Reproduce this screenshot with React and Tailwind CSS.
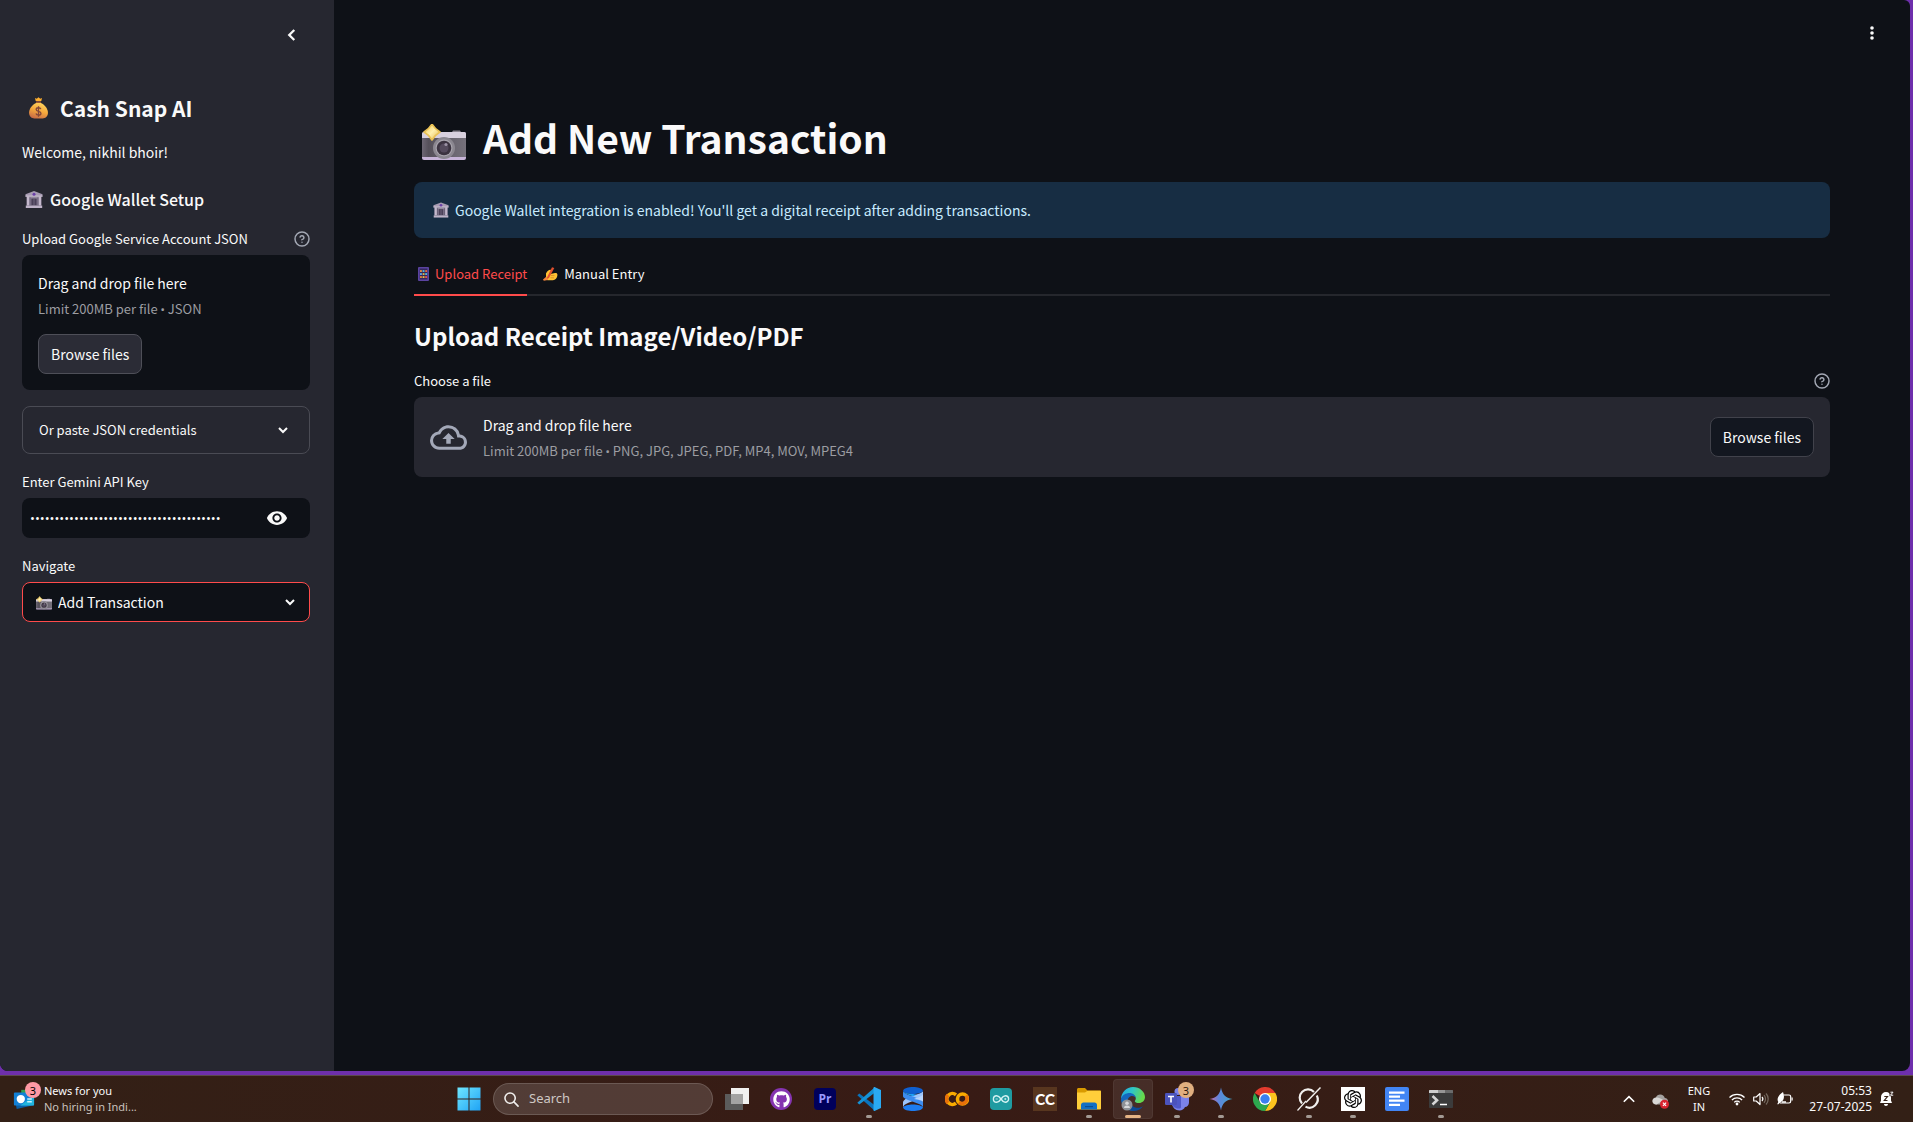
import React from "react";
import { SiOpenai } from "react-icons/si";
import { FaGithub } from "react-icons/fa";

/* ---------- Emoji-style pictograms ---------- */

function MoneyBag({ className }) {
  return (
    <svg viewBox="0 0 24 26" className={className} aria-hidden="true">
      <defs>
        <linearGradient id="bag" x1="0.7" y1="0" x2="0.3" y2="1">
          <stop offset="0" stopColor="#ffd35c" />
          <stop offset="0.5" stopColor="#f5a83c" />
          <stop offset="1" stopColor="#c86a45" />
        </linearGradient>
      </defs>
      <path d="M8 1.6 10 2.4 12 .8l2 1.6 2-.8-.8 3.4H8.8z" fill="#ffb02e" />
      <rect x="9" y="5.2" width="6" height="2.3" rx="1" fill="#9a5a3a" />
      <path d="M9.2 7.3h5.6C19.5 9.5 22.8 14 22.8 18.5c0 4.5-3.3 6.5-6 6.5H7.2c-2.7 0-6-2-6-6.5 0-4.5 3.3-9 8-11.2z" fill="url(#bag)" />
      <path d="M14.7 14.3c-.4-1.1-1.5-1.6-2.7-1.6-1.5 0-2.700.8-2.700 2.100 0 3 5.500 1.300 5.500 4.200 0 1.400-1.300 2.200-2.800 2.200-1.400 0-2.600-.7-2.900-1.900M12 11v12" fill="none" stroke="#84473a" strokeWidth="1.5" />
    </svg>
  );
}

function Bank({ className }) {
  return (
    <svg viewBox="0 0 18 17" className={className} aria-hidden="true">
      <path d="M9 0 17.5 3.2V5.5H.5V3.2z" fill="#a79bb2" />
      <path d="M1.5 5.5h15v9h-15z" fill="#94899f" />
      <path d="M2 5.5h2.2v9H2zM13.8 5.5H16v9h-2.200z" fill="#c4b8cc" />
      <path d="M4.7 6.5h.8v8h-.8zM12.5 6.5h.8v8h-.8z" fill="#5a5068" />
      <path d="M6.3 7.5h5.4v7H6.3z" fill="#4a4058" />
      <path d="M8.500 8v6.500h1V8z" fill="#6e647c" />
      <path d="M.8 14.5h16.4V17H.8z" fill="#bfb3c8" />
      <path d="M.5 4.6h17v1.1H.5z" fill="#cfc5d6" />
      <circle cx="9" cy="3.2" r="1.5" fill="#6a3fa8" />
    </svg>
  );
}

function Camera({ className }) {
  return (
    <svg viewBox="0 0 44 36" className={className} aria-hidden="true">
      <defs>
        <linearGradient id="camBody" x1="0" y1="0" x2="1" y2="0">
          <stop offset="0" stopColor="#6d6774" />
          <stop offset="0.15" stopColor="#55505a" />
          <stop offset="1" stopColor="#76727c" />
        </linearGradient>
        <linearGradient id="camSpark" x1="0" y1="0" x2="1" y2="1">
          <stop offset="0" stopColor="#f2c64a" />
          <stop offset="0.5" stopColor="#fff0ae" />
          <stop offset="1" stopColor="#e3b84d" />
        </linearGradient>
      </defs>
      <path d="M30 8l1-1.5h7l1 1.5z" fill="#8a848f" />
      <rect x="0" y="8" width="44" height="28" rx="2" fill="#c7b4d8" />
      <rect x="0" y="8" width="44" height="7" rx="2" fill="#d8d0de" />
      <rect x="0" y="14" width="44" height="19" fill="url(#camBody)" />
      <circle cx="22" cy="24" r="11" fill="#8b8790" />
      <circle cx="22" cy="24" r="8.5" fill="#a8a4ad" />
      <circle cx="22" cy="24" r="7.3" fill="#3b3340" />
      <circle cx="22" cy="24" r="4.5" fill="#544a5c" />
      <circle cx="24" cy="20.5" r="1.6" fill="#9c92a5" />
      <path d="M10 0C12 3.500 14.500 6 18 8 14.500 10 12 12.500 10 16 8 12.500 5.500 10 2 8 5.500 6 8 3.500 10 0z" fill="url(#camSpark)" stroke="#eac255" strokeWidth="1.6" strokeLinejoin="round" />
    </svg>
  );
}

function Abacus({ className }) {
  const rows = [3.2, 6.2, 9.2];
  const cols = [
    ["#f59a3c", "#58c7e8", "#f2703c"],
    ["#5fb4f5", "#f5c542", "#58c7e8"],
    ["#f5873c", "#f2d04a", "#f25c4a"],
  ];
  return (
    <svg viewBox="0 0 11 14" className={className} aria-hidden="true">
      <rect x="0" y="0" width="11" height="14" rx="1" fill="#5a43a0" />
      <rect x="1.6" y="1.5" width="7.8" height="11" fill="#33275e" />
      {rows.map((y, r) =>
        cols[r].map((c, i) => <rect key={r + "-" + i} x={2 + i * 2.6} y={y} width="1.9" height="1.7" fill={c} />)
      )}
    </svg>
  );
}

function WritingHand({ className }) {
  return (
    <svg viewBox="0 0 15 14" className={className} aria-hidden="true">
      <path d="M3 6.5C4.5 3.5 6 2.500 7.500 2.700c1 .4.8 1.500.2 2.500L7.500 7 12 6c1.500-.3 2.300.3 2.400 1.500.2 2-1 4.300-2.400 5-1.500.8-4.500 1-7 .8-2-.2-2.500-1.500-2-3z" fill="#ffc233" />
      <path d="M9 .2 11.300 1 6 11 3 12.500z" fill="#e2502f" />
      <path d="M8 8.500l3.500.2M7.500 10.700l3.500.2" stroke="#d98a1f" strokeWidth=".8" fill="none" />
      <path d="M3.500 9.500 0 12.500l.8 1.200 4.200-.7z" fill="#f2843c" />
    </svg>
  );
}

/* ---------- Interface glyphs ---------- */

function Chevron({ className, path = "M6 9l6 6 6-6", width = 3 }) {
  return (
    <svg viewBox="0 0 24 24" className={className} fill="none" stroke="currentColor" strokeWidth={width} aria-hidden="true">
      <path d={path} />
    </svg>
  );
}

function HelpIcon() {
  return (
    <svg viewBox="0 0 24 24" className="size-4 text-[#a3a8b4]" fill="none" stroke="currentColor" strokeWidth="2.2" strokeLinecap="round" strokeLinejoin="round" aria-hidden="true">
      <circle cx="12" cy="12" r="10.5" />
      <path d="M9.09 9a3 3 0 0 1 5.83 1c0 2-3 3-3 3M12 17h.01" />
    </svg>
  );
}

function EyeIcon() {
  return (
    <svg viewBox="0 0 24 24" className="size-[22px]" fill="currentColor" aria-hidden="true">
      <path d="M12 4.5C7 4.5 2.73 7.61 1 12c1.73 4.39 6 7.5 11 7.5s9.27-3.11 11-7.5c-1.73-4.39-6-7.5-11-7.5zM12 17c-2.76 0-5-2.24-5-5s2.24-5 5-5 5 2.24 5 5-2.24 5-5 5zm0-8c-1.66 0-3 1.34-3 3s1.34 3 3 3 3-1.34 3-3-1.34-3-3-3z" />
    </svg>
  );
}

function CloudUpload() {
  return (
    <svg viewBox="0 0 24 24" className="size-[37px] text-[#a3a8b8]" fill="currentColor" aria-hidden="true">
      <path d="M19.35 10.04A7.49 7.49 0 0 0 12 4C9.11 4 6.6 5.64 5.35 8.04A5.994 5.994 0 0 0 0 14c0 3.31 2.69 6 6 6h13c2.76 0 5-2.24 5-5 0-2.64-2.05-4.78-4.65-4.96zM19 18H6c-2.21 0-4-1.79-4-4 0-2.05 1.53-3.76 3.56-3.97l1.07-.11.5-.95A5.469 5.469 0 0 1 12 6c2.62 0 4.88 1.86 5.39 4.43l.3 1.5 1.53.11A2.98 2.98 0 0 1 22 15c0 1.65-1.35 3-3 3zM8 13h2.55v3h2.9v-3H16l-4-4z" />
    </svg>
  );
}

/* ---------- Sidebar ---------- */

function Label({ htmlFor, children, help }) {
  return (
    <div className="mb-1.5 flex h-5 items-center justify-between">
      <label htmlFor={htmlFor} className="text-[13px]/5">{children}</label>
      {help && (
        <button type="button" aria-label="Help">
          <HelpIcon />
        </button>
      )}
    </div>
  );
}

function FileLimit({ types }) {
  return (
    <p className="mt-1 text-[13px]/5 text-[#9c9da2]">
      Limit 200MB per file <span className="font-['Roboto'] leading-none">•</span> {types}
    </p>
  );
}

function Sidebar() {
  return (
    <aside className="w-[334px] shrink-0 bg-[#262730] pr-6 pl-[22px]">
      <div className="flex h-[70px] items-center justify-end pr-[7px]">
        <button type="button" aria-label="Collapse sidebar">
          <Chevron className="size-[22px]" path="M14.500 6.500 9 12l5.500 5.500" width={2.5} />
        </button>
      </div>
      <h1 className="mt-6 flex h-7 items-center gap-[11px] pl-1.5 text-[21px]/7 font-bold">
        <MoneyBag className="h-6 w-[21px]" />
        Cash Snap AI
      </h1>
      <p className="mt-[18px] text-sm/6">Welcome, nikhil bhoir!</p>
      <h3 className="mt-[23px] mb-[18px] flex items-center gap-[7px] pl-[3px] text-base/6 font-medium">
        <Bank className="h-[17px] w-[18px]" />
        Google Wallet Setup
      </h3>
      <Label htmlFor="service-json" help>Upload Google Service Account JSON</Label>
      <div className="rounded-lg bg-[#0e1117] p-4">
        <p className="text-sm/6">Drag and drop file here</p>
        <FileLimit types="JSON" />
        <button id="service-json" type="button" className="mt-[15px] h-10 rounded-lg border border-[#4e4f58] bg-[#2b2c36] px-3 text-sm/6">
          Browse files
        </button>
      </div>
      <button type="button" className="mt-4 flex h-12 w-full items-center justify-between rounded-lg border border-[#4a4b54] px-4 text-[13px]/5">
        Or paste JSON credentials
        <Chevron className="mr-0.5 size-4" />
      </button>
      <div className="mt-[18px]">
        <Label htmlFor="api-key">Enter Gemini API Key</Label>
        <div className="flex h-10 items-center rounded-lg bg-[#0e1117] pr-[22px] pl-2">
          <input id="api-key" type="password" defaultValue="abcdefghijklmnopqrstuvwxyz0123456789abc" className="min-w-0 flex-1 bg-transparent font-['Open_Sans'] text-[13px]/6 outline-none" />
          <button type="button" aria-label="Show password">
            <EyeIcon />
          </button>
        </div>
      </div>
      <div className="mt-[18px]">
        <Label htmlFor="navigate">Navigate</Label>
        <div className="relative">
          <select id="navigate" className="h-10 w-full appearance-none rounded-lg border border-[#ff4b4b] bg-[#0e1117] pl-[35px] text-sm/6 outline-none">
            <option>Add Transaction</option>
          </select>
          <Camera className="pointer-events-none absolute top-3.5 left-3.5 h-3.5 w-4" />
          <Chevron className="pointer-events-none absolute top-3 right-3 size-4" />
        </div>
      </div>
    </aside>
  );
}

/* ---------- Main panel ---------- */

function MainPanel() {
  return (
    <main className="flex min-w-0 flex-1 flex-col">
      <header className="flex h-[66px] items-center justify-end pr-[30px]">
        <button type="button" aria-label="Menu" className="w-4">
          <svg viewBox="0 0 16 16" className="size-4" fill="currentColor" aria-hidden="true">
            <circle cx="8" cy="3" r="1.8" />
            <circle cx="8" cy="8" r="1.8" />
            <circle cx="8" cy="13" r="1.8" />
          </svg>
        </button>
      </header>
      <div className="px-20 pt-[47px]">
        <h1 className="flex h-12 items-center gap-[17px] pl-2 text-[39px]/12 font-bold">
          <Camera className="mt-2.5 h-9 w-11" />
          Add New Transaction
        </h1>
        <div className="mt-[21px] flex h-14 items-center gap-1.5 rounded-lg bg-[#172d43] pl-[19px] text-sm/6 text-[#c7ebff]">
          <Bank className="h-4 w-4" />
          Google Wallet integration is enabled! You'll get a digital receipt after adding transactions.
        </div>
        <div role="tablist" className="mt-4 flex h-[42px] gap-4 border-b-2 border-[#25272d] text-[13px]">
          <button type="button" role="tab" aria-selected="true" className="-mb-0.5 flex items-center gap-1.5 border-b-2 border-[#ff4b4b] pl-1 text-[#ff4b4b]">
            <Abacus className="h-3.5 w-[11px]" />
            Upload Receipt
          </button>
          <button type="button" role="tab" aria-selected="false" className="flex items-center gap-1.5">
            <WritingHand className="h-3.5 w-[15px]" />
            Manual Entry
          </button>
        </div>
        <h2 className="mt-[22px] mb-[17px] text-2xl/9 font-bold">Upload Receipt Image/Video/PDF</h2>
        <Label htmlFor="receipt-file" help>Choose a file</Label>
        <div className="flex items-center rounded-lg bg-[#262730] p-4">
          <CloudUpload />
          <div className="mr-auto ml-4">
            <p className="text-sm/6">Drag and drop file here</p>
            <FileLimit types="PNG, JPG, JPEG, PDF, MP4, MOV, MPEG4" />
          </div>
          <button id="receipt-file" type="button" className="h-10 rounded-lg border border-[#41424b] bg-[#131720] px-3 text-sm/6">
            Browse files
          </button>
        </div>
      </div>
    </main>
  );
}

/* ---------- Taskbar ---------- */

const icon = "size-6";

function StartIcon() {
  return (
    <svg viewBox="0 0 24 24" className={icon}>
      <defs>
        <linearGradient id="win" x1="0" y1="0" x2="1" y2="1">
          <stop offset="0" stopColor="#6fe6ff" />
          <stop offset="1" stopColor="#1fa3f5" />
        </linearGradient>
      </defs>
      <path d="M.5.5h11v11H.5zM12.5.5h11v11h-11zM.5 12.5h11v11H.5zM12.5 12.5h11v11h-11z" fill="url(#win)" />
    </svg>
  );
}

function TaskViewIcon() {
  return (
    <svg viewBox="0 0 24 24" className={icon}>
      <path d="M6 1h18v16H6z" fill="#f0f0f0" />
      <path d="M0 7h18v16H0z" fill="#5b5b5b" />
      <path d="M6 7h12v10H6z" fill="#a3a3a3" />
    </svg>
  );
}

function GithubIcon() {
  return (
    <span className="flex size-[22px] items-center justify-center rounded-full bg-[#8534b0] text-white">
      <FaGithub className="size-[17px]" />
    </span>
  );
}

function PremiereIcon() {
  return (
    <span className="flex size-[22px] items-center justify-center rounded bg-[#00005b] font-['Open_Sans'] text-xs font-bold text-[#9999ff]">Pr</span>
  );
}

function VsCodeIcon() {
  return (
    <svg viewBox="0 0 24 24" className={icon}>
      <path d="M.3 8.3 2.3 6.5 18 18.5V24z" fill="#0a74bd" />
      <path d="M.3 15.7 2.3 17.5 18 5.5V0z" fill="#1592d6" />
      <path d="M17.5 0 24 3v18l-6.5 3c-.8 0-1-.5-1-1V1c0-.5.2-1 1-1z" fill="#2aaaf2" />
    </svg>
  );
}

function RibbonIcon() {
  return (
    <svg viewBox="0 0 24 24" className={icon}>
      <path d="M22 4v5C20 12 13 13.500 8 15.500 4 17 2.500 18.500 2 20.500V15C3 12 8 10 12 8.500 17 7 21 6 22 4z" fill="#9cc4fb" />
      <path d="M2 4v5.500C3 12 9 13.500 14 15.500 19 17 21.500 18.500 22 20.500V15C21 12.500 16 11 12 9.500 7 7.800 3 6.500 2 4z" fill="#3c8cf0" />
      <path d="M13 12C16 10.800 20.500 9.800 22 7.500V15c-.5-1.500-5-2.500-9-3z" fill="#b9d5fc" />
      <path d="M2 4C2.500 1 7.500 0 12 0s9.500 1 10 4C21 6 16.500 7 12 7S3 6 2 4z" fill="#0f5fd0" />
      <path d="M2 20.500C2.500 23 7.500 24 12 24s9.500-1 10-3.500C21 18.500 16.500 17.500 12 17.500S3 18.500 2 20.500z" fill="#1d7cf0" />
      <path d="M2 4c1 2 5.500 3 10 3l3.500.800-3.500 1.500C7 7.800 3 6.500 2 4z" fill="#1ea0f7" />
    </svg>
  );
}

function ColabIcon() {
  return (
    <svg viewBox="0 0 24 24" className={icon} fill="none" strokeWidth="3.6">
      <path d="M11 7.8A5.5 5.5 0 1 0 11 16.2" stroke="#f9ab00" />
      <path d="M3 8a5.5 5.5 0 0 0 0 8" stroke="#e8710a" />
      <circle cx="17.5" cy="12" r="5" stroke="#f9ab00" />
      <path d="M21 8.5a5 5 0 0 1-7 7" stroke="#e8710a" />
    </svg>
  );
}

function ArduinoIcon() {
  return (
    <svg viewBox="0 0 24 24" className={icon}>
      <rect x="1" y="1" width="22" height="22" rx="4" fill="#1f9ba1" />
      <path d="M12 12c-1.5-2.3-2.7-3.3-4.3-3.3a3.3 3.3 0 0 0 0 6.6c1.6 0 2.8-1 4.3-3.3zm0 0c1.5 2.3 2.7 3.3 4.3 3.3a3.3 3.3 0 0 0 0-6.6c-1.6 0-2.8 1-4.3 3.3z" fill="none" stroke="#d5f3f3" strokeWidth="1.4" />
      <path d="M6.6 12h2.2M15.2 12h2.2M16.3 10.9v2.2" stroke="#d5f3f3" strokeWidth=".8" />
    </svg>
  );
}

function CcIcon() {
  return (
    <span className="flex size-6 items-center justify-center bg-[#58361f] font-['Lato'] text-[15px] font-black text-white">CC</span>
  );
}

function ExplorerIcon() {
  return (
    <svg viewBox="0 0 24 24" className={icon}>
      <path d="M0 2.5C0 1.700.7 1 1.500 1H8l2.500 2.500H23c.6 0 1 .4 1 1V8H0z" fill="#d99a00" />
      <path d="M0 5.5h8L10.5 3.8H23c.6 0 1 .4 1 1V21.5c0 .6-.4 1-1 1H1c-.6 0-1-.4-1-1z" fill="#ffce3a" />
      <path d="M4 22.5V18c0-1.5 1-2.5 2.5-2.5h11c1.500 0 2.500 1 2.500 2.500v4.500z" fill="#1270c4" />
      <path d="M8 19h8v1.200H8z" fill="#0a4e92" />
    </svg>
  );
}

function EdgeIcon() {
  return (
    <svg viewBox="0 0 24 24" className={icon}>
      <defs>
        <linearGradient id="edgeTop" x1="0" y1="0" x2="1" y2="0.3">
          <stop offset="0" stopColor="#1fa5e8" />
          <stop offset="0.5" stopColor="#2fc6c4" />
          <stop offset="1" stopColor="#66d94c" />
        </linearGradient>
      </defs>
      <path d="M0 12C.3 5 5.5 0 12 0c7 0 12 5 12 10 0 3.7-2.9 6-6 6-2.6 0-4.2-1-4.2-1.8 0-.6 1-1 1-3C14.8 9 12.5 7.4 9 7.4 4.5 7.4 1 9.8 0 12z" fill="url(#edgeTop)" />
      <path d="M0 12c1-4 5-6 8.5-6 3.5 0 6 2.2 6.3 5-.6-1.2-2-2-3.5-2-3 0-4.8 2.5-4.8 5.5 0 4.5 3.5 8.5 8 9C6.5 25 0 19.5 0 12z" fill="#1468bd" />
      <path d="M9 12.5c-1 5 3.500 8.300 8 8.300 2 0 3.700-.7 5-1.500-2 3-5.500 4.700-9.500 4.700-4 0-6.500-4-6-7.500.2-1.800 1.200-3.300 2.500-4z" fill="#0d4a94" />
      <circle cx="6" cy="18" r="5.5" fill="#8f9296" />
      <circle cx="6" cy="16.3" r="1.8" fill="#d6d8da" />
      <path d="M3 21c.2-1.8 1.3-2.5 3-2.5s2.8.7 3 2.5z" fill="#d6d8da" />
    </svg>
  );
}

function TeamsIcon() {
  return (
    <span className="relative">
      <svg viewBox="0 0 24 24" className={icon}>
        <circle cx="13" cy="4.5" r="3.5" fill="#7b83eb" />
        <path d="M7 9h16c.6 0 1 .4 1 1v5.5c0 2.5-2 4.5-4 4.5-1 2.3-3 3.5-5.5 3.5C10.5 23.5 7 20.5 7 16z" fill="#7b83eb" />
        <path d="M7 9h9v11c0 1-1 1.5-2 1.5C9.5 21.5 7 19 7 16z" fill="#5059c9" />
        <rect x="0" y="6" width="12" height="12" rx="1.2" fill="#4b53bc" />
        <path d="M3 8.8h6v1.5H6.8V15.5H5.2v-5.2H3z" fill="#fff" />
      </svg>
      <span className="absolute -top-[5px] -right-[5px] flex size-4 items-center justify-center rounded-full bg-[#e0af80] text-[11px] leading-none text-[#2a1a10]">3</span>
    </span>
  );
}

function GeminiIcon() {
  return (
    <svg viewBox="0 0 24 24" className={icon}>
      <defs>
        <linearGradient id="gem" x1="0" y1="0.5" x2="1" y2="0.5">
          <stop offset="0" stopColor="#c66aa0" />
          <stop offset="0.4" stopColor="#5f86dd" />
          <stop offset="1" stopColor="#3fa4c8" />
        </linearGradient>
      </defs>
      <path d="M12 .5C13.2 7.5 16.5 10.8 23.5 12 16.5 13.2 13.2 16.5 12 23.5 10.8 16.5 7.5 13.2.5 12 7.5 10.8 10.8 7.5 12 .5z" fill="url(#gem)" />
    </svg>
  );
}

function ChromeIcon() {
  return (
    <svg viewBox="0 0 24 24" className={icon}>
      <path d="M12 12 1.6 6A12 12 0 0 1 22.4 6H12z" fill="#e33b2e" />
      <path d="M12 12V6h10.4A12 12 0 0 1 12 24l5.2-9z" fill="#fcc31e" />
      <path d="M12 12l5.2 3L12 24A12 12 0 0 1 1.6 6l5.2 9z" fill="#2da94f" />
      <circle cx="12" cy="12" r="6" fill="#fff" />
      <circle cx="12" cy="12" r="4.7" fill="#3a7ff0" />
    </svg>
  );
}

function GrokIcon() {
  return (
    <svg viewBox="0 0 24 24" className={icon} fill="none" stroke="#f2f0ee" strokeWidth="2.2">
      <path d="M5 16.500A8.300 8.300 0 0 1 17 5" />
      <path d="M19.800 8.500A8.300 8.300 0 0 1 8.500 19.600" />
      <path d="M23.500.5 9 15.500" strokeWidth="1.5" />
      <path d="M9 14 .5 23.500" strokeWidth="1.2" />
    </svg>
  );
}

function GptIcon() {
  return (
    <span className="flex size-6 items-center justify-center bg-white text-black">
      <SiOpenai className="size-[18px]" />
    </span>
  );
}

function DocsIcon() {
  return (
    <svg viewBox="0 0 24 24" className={icon}>
      <rect width="24" height="24" rx="2" fill="#4285f4" />
      <path d="M4 4.5h15.5v2.3H4zM4 8.5h11v2.3H4zM4 12.5h15.5v2.3H4zM4 16.8h11v2.3H4z" fill="#fff" />
    </svg>
  );
}

function TerminalIcon() {
  return (
    <svg viewBox="0 0 24 24" className={icon}>
      <path d="M0 4c0-.6.4-1 1-1h22c.6 0 1 .4 1 1v16c0 .6-.4 1-1 1H1c-.6 0-1-.4-1-1z" fill="#3b3b3b" />
      <path d="M0 4c0-.6.4-1 1-1h8v3H0z" fill="#cfcfcf" />
      <path d="M9 3h7v3H9z" fill="#969696" />
      <path d="M16 3h7c.6 0 1 .4 1 1v2h-8z" fill="#6b6b6b" />
      <path d="M3.5 9 8 13.2 3.5 17.5" stroke="#d6d6d6" strokeWidth="2.6" fill="none" />
      <path d="M11 17.5h7" stroke="#fff" strokeWidth="1.5" />
    </svg>
  );
}

const apps = [
  { name: "Task view", Icon: TaskViewIcon },
  { name: "GitHub Desktop", Icon: GithubIcon },
  { name: "Premiere Pro", Icon: PremiereIcon },
  { name: "Visual Studio Code", Icon: VsCodeIcon, running: true },
  { name: "Ribbon", Icon: RibbonIcon },
  { name: "Colab", Icon: ColabIcon },
  { name: "Arduino", Icon: ArduinoIcon },
  { name: "CapCut", Icon: CcIcon },
  { name: "File Explorer", Icon: ExplorerIcon, running: true },
  { name: "Edge", Icon: EdgeIcon, active: true },
  { name: "Teams", Icon: TeamsIcon, running: true },
  { name: "Gemini", Icon: GeminiIcon, running: true },
  { name: "Chrome", Icon: ChromeIcon },
  { name: "Grok", Icon: GrokIcon, running: true },
  { name: "ChatGPT", Icon: GptIcon, running: true },
  { name: "Docs", Icon: DocsIcon },
  { name: "Terminal", Icon: TerminalIcon, running: true },
];

function TaskButton({ name, Icon, running, active }) {
  return (
    <button
      type="button"
      aria-label={name}
      className={
        "relative mx-0.5 flex h-10 w-10 items-center justify-center rounded " +
        (active ? "bg-white/8 ring-1 ring-white/5 ring-inset" : "")
      }
    >
      <Icon />
      {running && <span className="absolute bottom-px h-[3px] w-1.5 rounded-full bg-[#a39a94]" />}
      {active && <span className="absolute bottom-px h-[3px] w-4 rounded-full bg-[#e6b485]" />}
    </button>
  );
}

function NewsWidget() {
  return (
    <button type="button" className="flex items-center gap-[9px] pl-[13px] text-left">
      <span className="relative">
        <svg viewBox="0 0 24 24" className="size-[22px]" aria-hidden="true">
          <path d="M2 12l19 7-17 4z" fill="#0b5fa5" />
          <path d="M9 2h8v6H9z" fill="#2f9e4f" />
          <rect x="1" y="5" width="22" height="14" rx="1" fill="#1280d6" />
          <path d="M8 19h14c.6 0 1-.4 1-1V8z" fill="#20b4dd" />
          <circle cx="8.5" cy="12" r="4.5" fill="#fff" />
          <path d="M15.5 12h5M15.5 15h5" stroke="#c9f1ff" strokeWidth="1.5" />
        </svg>
        <span className="absolute -top-1.5 -right-1.5 flex size-4 items-center justify-center rounded-full bg-[#ff99a4] text-[11px] leading-none text-black">3</span>
      </span>
      <span className="text-[11px]/4">
        <span className="block">News for you</span>
        <span className="block text-[#c9c2bd]">No hiring in Indi...</span>
      </span>
    </button>
  );
}

function Tray() {
  return (
    <div className="flex items-center text-[11px]/4">
      <svg viewBox="0 0 12 12" className="size-3" fill="none" stroke="#fff" strokeWidth="1.6" aria-hidden="true">
        <path d="M.8 8.8 6 3.6l5.2 5.2" />
      </svg>
      <svg viewBox="0 0 18 16" className="mt-1 ml-[17px] h-4 w-[18px]" aria-hidden="true">
        <path d="M4.5 11.5C2 11.5.5 10 .5 8S2 4.8 3.8 4.6C4.6 2.5 6.3 1.5 8.2 1.5c2.3 0 4 1.3 4.6 3.4 2 .1 3.2 1.5 3.2 3.2 0 2-1.3 3.4-3.3 3.400z" fill="#a5a2a0" />
        <path d="M4 4.7C6 4.3 8 5 11.5 7.2L4.5 11.5C2 11.5.5 10 .5 8S2 4.9 4 4.7z" fill="#dad8d6" />
        <circle cx="12.5" cy="11.2" r="4.5" fill="#d8232f" />
        <path d="M10.9 9.6l3.2 3.2M14.1 9.6l-3.2 3.2" stroke="#fff" strokeWidth="1.1" />
      </svg>
      <div className="ml-[17px] w-6 text-center">
        <div>ENG</div>
        <div>IN</div>
      </div>
      <svg viewBox="0 0 16 14" className="ml-[18px] h-3.5 w-4" fill="none" stroke="#fff" strokeWidth="1.3" aria-hidden="true">
        <path d="M.5 5.5a10.6 10.6 0 0 1 15 0M2.9 8a7.2 7.2 0 0 1 10.2 0M5.2 10.4a4 4 0 0 1 5.6 0" />
        <circle cx="8" cy="12" r="1.4" fill="#fff" stroke="none" />
      </svg>
      <svg viewBox="0 0 16 14" className="ml-2 h-3.5 w-4" fill="none" stroke="#fff" strokeWidth="1.2" aria-hidden="true">
        <path d="M.7 5v4h2.5L7 12.5v-11L3.2 5z" strokeLinejoin="round" />
        <path d="M9 5a3 3 0 0 1 0 4" />
        <path d="M11 3.2a5.5 5.5 0 0 1 0 7.6M13 1.5a8 8 0 0 1 0 11" stroke="#75695f" />
      </svg>
      <svg viewBox="0 0 16 14" className="ml-2 h-3.5 w-4" aria-hidden="true">
        <path d="M6.5 3H12c1 0 1.700.7 1.700 1.700v4.600c0 1-.7 1.700-1.700 1.700H3" fill="none" stroke="#fff" strokeWidth="1.2" />
        <path d="M14.5 5.5h1.2v3h-1.200z" fill="#fff" />
        <path d="M6 0c1.500 3.500 1.500 8.500-2 10L1 12.500.3 12l1-2C-.8 6.500 2 2.500 6 0z" fill="#fff" />
        <path d="M5 10h4" stroke="#fff" strokeWidth="1.5" />
      </svg>
      <div className="ml-4 w-[63px] text-right text-xs/4 whitespace-nowrap">
        <div>05:53</div>
        <div>27-07-2025</div>
      </div>
      <svg viewBox="0 0 14 16" className="mr-4 ml-2 h-4 w-3.5" aria-hidden="true">
        <path d="M6 1a5 5 0 0 0-5 5v3.5L0 12h12l-1-2.5V6a5 5 0 0 0-5-5zM4 13h4c0 1.2-.8 2-2 2s-2-.8-2-2z" fill="#fff" />
        <path d="M4.3 5.500h3.200L4.300 9.500h3.200" stroke="#3a251a" strokeWidth="1.2" fill="none" />
        <path d="M9.5.2h4.5v5H9.5z" fill="#33211a" />
        <path d="M10.5 1.2h2.5l-2.5 3h2.700" stroke="#fff" strokeWidth="1" fill="none" />
      </svg>
    </div>
  );
}

function Taskbar() {
  return (
    <footer className="flex h-[47px] items-center border-t border-[#5b4a4c] bg-linear-to-r from-[#332016] via-[#381b15] to-[#332016] pr-[3px] font-['Noto_Sans',sans-serif]">
      <div className="flex flex-1">
        <NewsWidget />
      </div>
      <div className="flex items-center">
        <TaskButton name="Start" Icon={StartIcon} />
        <div className="mx-0.5 flex h-8 w-[220px] items-center rounded-full border border-white/15 bg-white/14 pl-2.5">
          <svg viewBox="0 0 16 16" className="size-[15px]" fill="none" stroke="#f0eeec" strokeWidth="1.7" strokeLinecap="round" aria-hidden="true">
            <circle cx="6.5" cy="6.5" r="5.5" />
            <path d="M10.6 10.6 15 15" />
          </svg>
          <input type="text" aria-label="Search" placeholder="Search" className="ml-2.5 w-40 bg-transparent text-[13px] outline-none placeholder:text-[#cfc8c4]" />
        </div>
        {apps.map((app) => (
          <TaskButton key={app.name} {...app} />
        ))}
      </div>
      <div className="flex flex-1 justify-end">
        <Tray />
      </div>
    </footer>
  );
}

export default function App() {
  return (
    <div className="flex min-h-screen flex-col bg-[#6e2fac] font-['Noto_Sans_CJK_SC',sans-serif] text-[#fafafa]">
      <div className="mr-[3px] mb-1 flex flex-1 overflow-hidden rounded-b-lg rounded-tr-md bg-[#0e1117]">
        <Sidebar />
        <MainPanel />
      </div>
      <Taskbar />
    </div>
  );
}
